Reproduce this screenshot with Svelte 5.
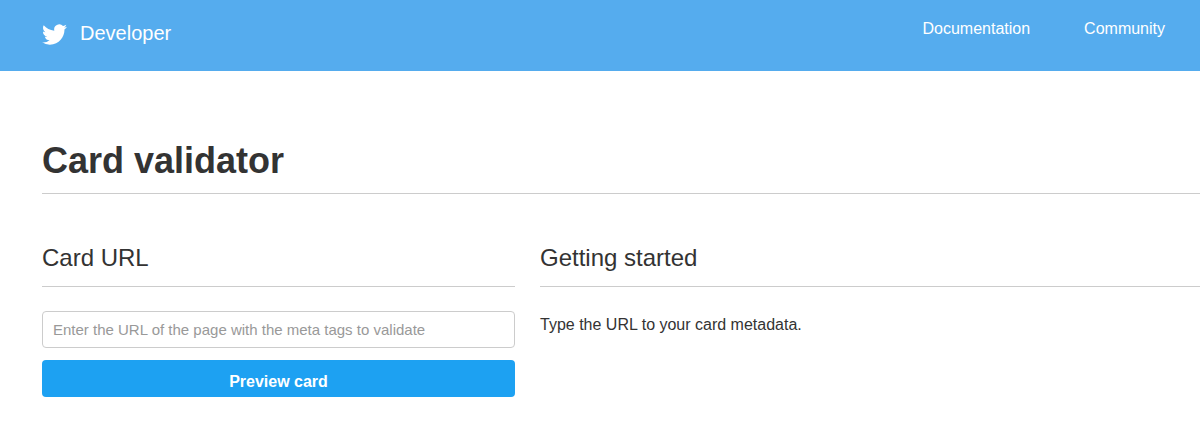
<script>
  const links = ['Documentation', 'Community'];
</script>

<div class="page">
  <header class="topbar">
    <a class="brand" href="#home">
      <svg class="bird" viewBox="0 0 24 24" aria-hidden="true"><path d="M23.95 4.57a10 10 0 0 1-2.82.77 4.96 4.96 0 0 0 2.16-2.72c-.95.55-2 .95-3.12 1.18a4.92 4.92 0 0 0-8.38 4.48C7.69 8.1 4.07 6.13 1.64 3.16a4.82 4.82 0 0 0-.66 2.47c0 1.71.87 3.21 2.19 4.1a4.9 4.9 0 0 1-2.23-.61v.06a4.92 4.92 0 0 0 3.95 4.83 5 5 0 0 1-2.21.08 4.94 4.94 0 0 0 4.6 3.42A9.87 9.87 0 0 1 0 19.54a14 14 0 0 0 7.56 2.21c9.05 0 14-7.5 14-13.98 0-.21 0-.42-.02-.63a9.94 9.94 0 0 0 2.46-2.55z"/></svg>
      <span>Developer</span>
    </a>
    <nav class="nav">
      {#each links as link}
        <a href="#{link}">{link}</a>
      {/each}
    </nav>
  </header>

  <main class="content">
    <h1>Card validator</h1>
    <div class="columns">
      <section class="left">
        <h2>Card URL</h2>
        <input type="text" placeholder="Enter the URL of the page with the meta tags to validate" />
        <button type="button">Preview card</button>
      </section>
      <section class="right">
        <h2>Getting started</h2>
        <p>Type the URL to your card metadata.</p>
      </section>
    </div>
  </main>
</div>

<style>
  :global(body) {
    margin: 0;
    background: #fff;
    overflow: hidden;
  }
  .page {
    font-family: "Liberation Sans", Arial, sans-serif;
    color: #333;
    height: 435px;
    overflow: hidden;
  }
  .topbar {
    height: 71px;
    background: #55acee;
    display: flex;
    align-items: flex-start;
    justify-content: space-between;
    padding: 0 35px 0 42px;
  }
  .brand {
    display: flex;
    align-items: center;
    gap: 13px;
    margin-top: 18px;
    color: #fff;
    text-decoration: none;
    font-size: 20px;
    line-height: 24px;
  }
  .bird {
    width: 25px;
    height: 25px;
    fill: #fff;
    margin-top: 4px;
  }
  .nav {
    display: flex;
    gap: 54px;
    margin-top: 19px;
  }
  .nav a {
    color: #fff;
    text-decoration: none;
    font-size: 16px;
    line-height: 20px;
  }
  .content {
    padding: 68px 0 0 42px;
  }
  h1 {
    margin: 0;
    font-size: 36px;
    line-height: 44px;
    font-weight: 700;
    color: #333;
    padding-bottom: 10px;
    border-bottom: 1px solid #ccc;
  }
  .columns {
    display: flex;
    gap: 25px;
    margin-top: 48px;
  }
  .left {
    width: 473px;
    flex: none;
    display: flex;
    flex-direction: column;
  }
  .right {
    flex: 1;
  }
  h2 {
    margin: 0;
    font-size: 24px;
    line-height: 32px;
    font-weight: 400;
    color: #333;
    padding-bottom: 12px;
    border-bottom: 1px solid #ccc;
  }
  input {
    box-sizing: border-box;
    width: 100%;
    height: 37px;
    margin-top: 24px;
    padding: 0 10px;
    border: 1px solid #ccc;
    border-radius: 4px;
    font: inherit;
    font-size: 15px;
    color: #333;
    background: #fff;
  }
  input::placeholder {
    color: #999;
    opacity: 1;
  }
  button {
    width: 100%;
    height: 37px;
    margin-top: 12px;
    border: 0;
    border-radius: 4px;
    background: #1da1f2;
    color: #fff;
    font: inherit;
    font-size: 16px;
    font-weight: 700;
    padding: 6px 0 0;
  }
  p {
    margin: 24px 0 0;
    font-size: 16px;
    line-height: 28px;
    color: #333;
  }
</style>
